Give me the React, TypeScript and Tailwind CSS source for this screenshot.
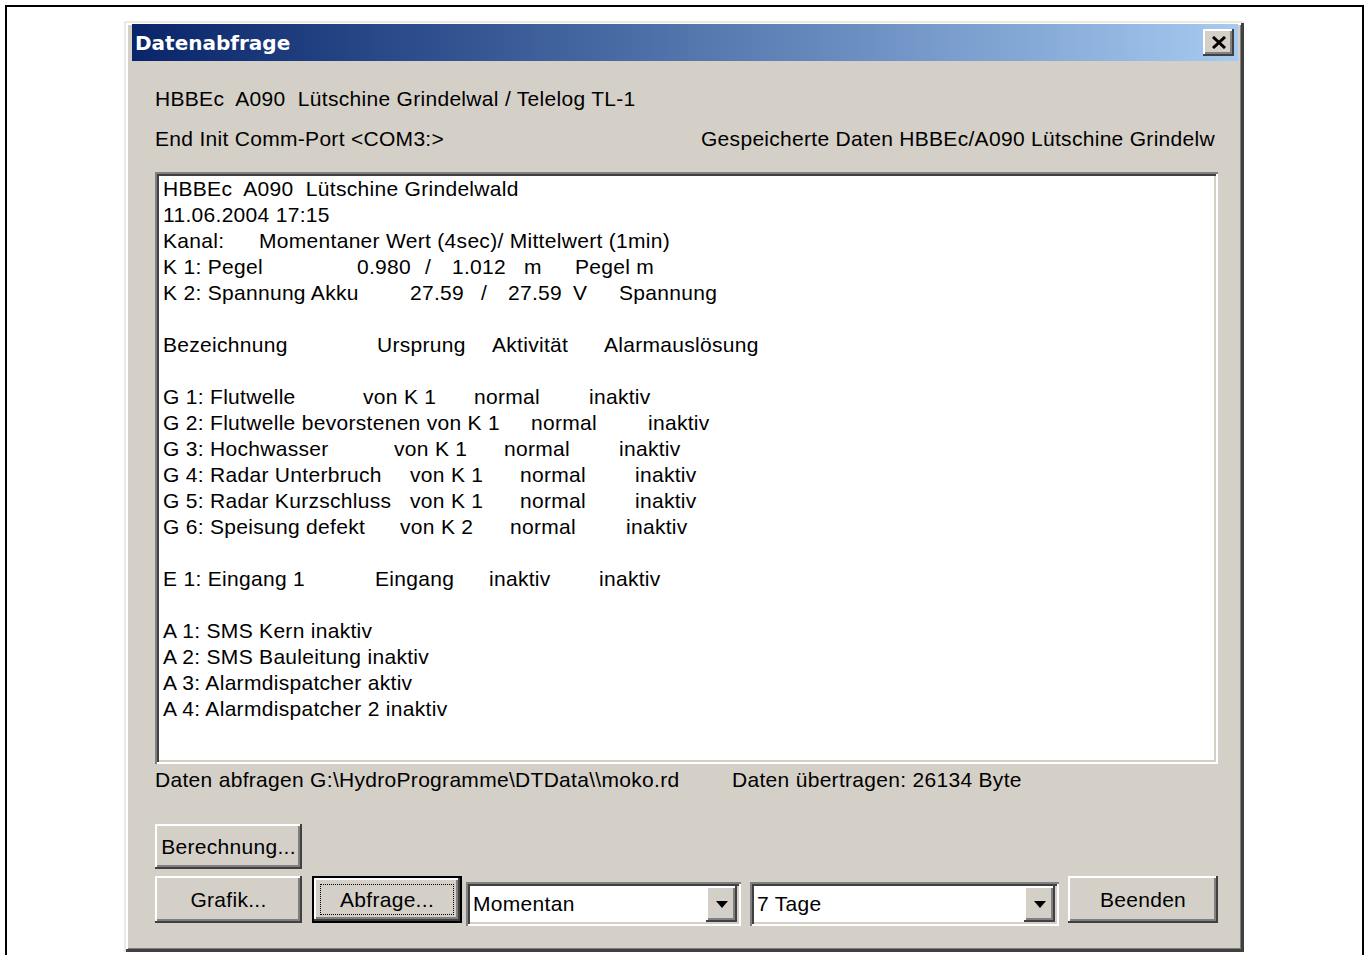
import type { ReactNode } from 'react';

// classic 3D bevels, doubled for the large-font dialog
const raised = 'shadow-[inset_-2px_-2px_0_#404040,inset_2px_2px_0_#ffffff,inset_-4px_-4px_0_#808080]';
const sunken = 'shadow-[inset_2px_2px_0_#808080,inset_-2px_-2px_0_#ffffff,inset_4px_4px_0_#404040,inset_-4px_-4px_0_#d4d0c8]';

function Line({ children }: { children?: ReactNode }) {
  return <div className="flex h-[26px] items-center whitespace-pre">{children}</div>;
}

function PushButton({ className, children }: { className: string; children: ReactNode }) {
  return (
    <div className={`flex shrink-0 items-center justify-center bg-[#d4d0c8] ${raised} ${className}`}>
      {children}
    </div>
  );
}

function DropArrow() {
  return (
    <svg width="12" height="7" viewBox="0 0 12 7">
      <polygon points="0,0 12,0 6,7" fill="#000" />
    </svg>
  );
}

function Combo({ value, className }: { value: string; className: string }) {
  return (
    <div className={`flex h-[44px] shrink-0 items-stretch bg-white p-[4px] ${sunken} ${className}`}>
      <div className="flex flex-1 items-center pl-[3px]">{value}</div>
      <div className={`flex w-[31px] items-center justify-center bg-[#d4d0c8] ${raised}`}>
        <DropArrow />
      </div>
    </div>
  );
}

export default function App() {
  return (
    <div className="h-[955px] w-[1368px] overflow-hidden bg-white pl-[5px] pr-[4px] pt-[5px] font-['Liberation_Sans',Arial,sans-serif] text-[21px] tracking-[0.3px] text-black">
      <div className="h-[960px] border-l-2 border-r-2 border-t-2 border-black pl-[117px] pt-[14px]">
        {/* dialog window */}
        <div className="flex h-[931px] w-[1120px] flex-col bg-[#d4d0c8] pl-[8px] pr-[6px] pt-[3px] shadow-[inset_2px_2px_0_#ece9e2,inset_-3px_-3px_0_#404040,inset_4px_4px_0_#ffffff,inset_-4px_-4px_0_#808080]">
          <div className="flex h-[37px] items-center justify-between bg-linear-to-r from-[#0a246a] to-[#a6caf0] pl-[3px] pr-[4px]">
            <span className="font-['DejaVu_Sans',Verdana,sans-serif] text-[20px] font-bold tracking-normal text-white">Datenabfrage</span>
            <div className={`flex h-[27px] w-[31px] items-center justify-center bg-[#d4d0c8] ${raised}`}>
              <svg width="16" height="13" viewBox="0 0 16 13">
                <path d="M2 1 L14 12 M14 1 L2 12" stroke="#000" strokeWidth="3" />
              </svg>
            </div>
          </div>

          <div className="flex flex-1 flex-col pl-[23px] pr-[20px]">
            <div className="mt-[25px] h-[26px] whitespace-pre leading-[26px]">HBBEc  A090  Lütschine Grindelwal / Telelog TL-1</div>
            <div className="mt-[14px] flex h-[26px] items-center justify-between whitespace-pre pr-[3px]">
              <span>End Init Comm-Port &lt;COM3:&gt;</span>
              <span>Gespeicherte Daten HBBEc/A090 Lütschine Grindelw</span>
            </div>

            {/* report text */}
            <div className={`mt-[20px] h-[592px] bg-white pl-[8px] pt-[4px] ${sunken}`}>
              <Line>HBBEc  A090  Lütschine Grindelwald</Line>
              <Line>11.06.2004 17:15</Line>
              <Line>
                <span className="w-[96px] shrink-0">Kanal:</span>
                <span>Momentaner Wert (4sec)/ Mittelwert (1min)</span>
              </Line>
              <Line>
                <span className="w-[194px] shrink-0">K 1: Pegel</span>
                <span className="w-[68px] shrink-0">0.980</span>
                <span className="w-[27px] shrink-0">/</span>
                <span className="w-[72px] shrink-0">1.012</span>
                <span className="w-[51px] shrink-0">m</span>
                <span>Pegel m</span>
              </Line>
              <Line>
                <span className="w-[247px] shrink-0">K 2: Spannung Akku</span>
                <span className="w-[71px] shrink-0">27.59</span>
                <span className="w-[27px] shrink-0">/</span>
                <span className="w-[65px] shrink-0">27.59</span>
                <span className="w-[46px] shrink-0">V</span>
                <span>Spannung</span>
              </Line>
              <Line />
              <Line>
                <span className="w-[214px] shrink-0">Bezeichnung</span>
                <span className="w-[115px] shrink-0">Ursprung</span>
                <span className="w-[112px] shrink-0">Aktivität</span>
                <span>Alarmauslösung</span>
              </Line>
              <Line />
              <Line>
                <span className="w-[200px] shrink-0">G 1: Flutwelle</span>
                <span className="w-[111px] shrink-0">von K 1</span>
                <span className="w-[115px] shrink-0">normal</span>
                <span>inaktiv</span>
              </Line>
              <Line>
                <span className="w-[368px] shrink-0">G 2: Flutwelle bevorstenen von K 1</span>
                <span className="w-[117px] shrink-0">normal</span>
                <span>inaktiv</span>
              </Line>
              <Line>
                <span className="w-[231px] shrink-0">G 3: Hochwasser</span>
                <span className="w-[110px] shrink-0">von K 1</span>
                <span className="w-[115px] shrink-0">normal</span>
                <span>inaktiv</span>
              </Line>
              <Line>
                <span className="w-[247px] shrink-0">G 4: Radar Unterbruch</span>
                <span className="w-[110px] shrink-0">von K 1</span>
                <span className="w-[115px] shrink-0">normal</span>
                <span>inaktiv</span>
              </Line>
              <Line>
                <span className="w-[247px] shrink-0">G 5: Radar Kurzschluss</span>
                <span className="w-[110px] shrink-0">von K 1</span>
                <span className="w-[115px] shrink-0">normal</span>
                <span>inaktiv</span>
              </Line>
              <Line>
                <span className="w-[237px] shrink-0">G 6: Speisung defekt</span>
                <span className="w-[110px] shrink-0">von K 2</span>
                <span className="w-[116px] shrink-0">normal</span>
                <span>inaktiv</span>
              </Line>
              <Line />
              <Line>
                <span className="w-[212px] shrink-0">E 1: Eingang 1</span>
                <span className="w-[114px] shrink-0">Eingang</span>
                <span className="w-[110px] shrink-0">inaktiv</span>
                <span>inaktiv</span>
              </Line>
              <Line />
              <Line>A 1: SMS Kern inaktiv</Line>
              <Line>A 2: SMS Bauleitung inaktiv</Line>
              <Line>A 3: Alarmdispatcher aktiv</Line>
              <Line>A 4: Alarmdispatcher 2 inaktiv</Line>
            </div>

            <div className="mt-[3px] flex h-[26px] items-center whitespace-pre">
              <span className="w-[577px] shrink-0">Daten abfragen G:\HydroProgramme\DTData\\moko.rd</span>
              <span>Daten übertragen: 26134 Byte</span>
            </div>

            <PushButton className="mt-[31px] h-[45px] w-[147px]">Berechnung...</PushButton>

            <div className="mt-[7px] flex items-start">
              <PushButton className="h-[47px] w-[147px]">Grafik...</PushButton>
              {/* default button with focus rectangle */}
              <div className="relative ml-[10px] h-[47px] w-[150px] shrink-0 border-2 border-black">
                <div className={`flex h-full w-full items-center justify-center bg-[#d4d0c8] ${raised}`}>Abfrage...</div>
                <div className="absolute inset-[6px] border border-dotted border-black" />
              </div>
              <Combo value="Momentan" className="ml-[4px] mt-[6px] w-[275px]" />
              <Combo value="7 Tage" className="ml-[9px] mt-[6px] w-[309px]" />
              <PushButton className="ml-[9px] h-[47px] w-[150px]">Beenden</PushButton>
            </div>
          </div>
        </div>
      </div>
    </div>
  );
}
